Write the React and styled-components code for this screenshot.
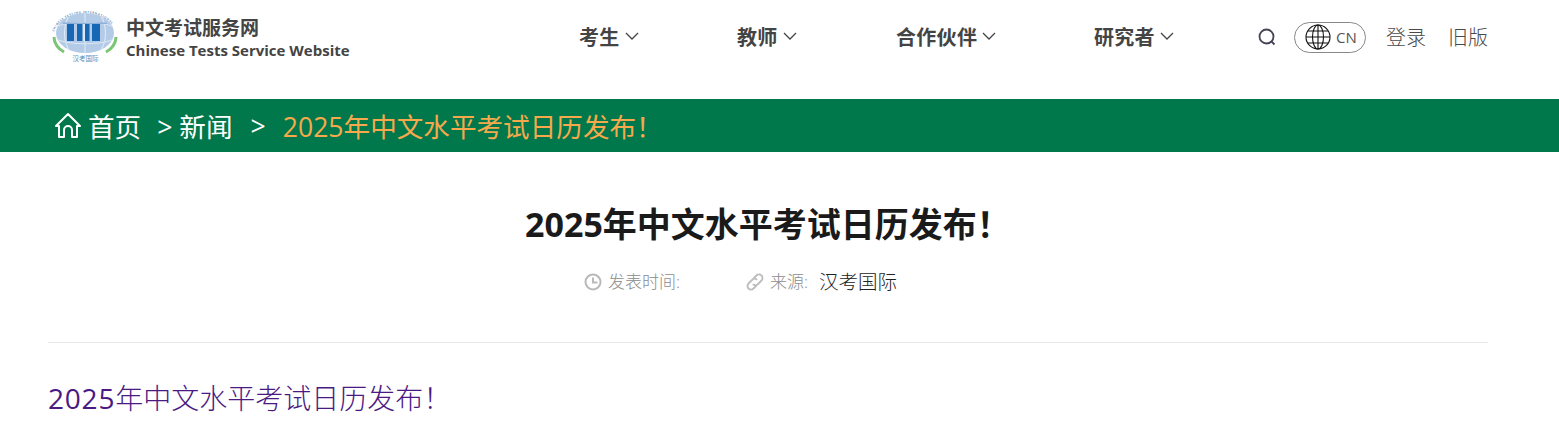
import React from 'react'
import styled, { createGlobalStyle } from 'styled-components'

const GlobalStyle = createGlobalStyle`
    html, body {
        margin: 0;
        padding: 0;
        background: #fff;
        font-family: "Open Sans", "Noto Sans CJK SC", sans-serif;
    }
    * {
        box-sizing: border-box;
    }
`;

const Header = styled.header`
    height: 99px;
    padding: 0 71px 0 52px;
    display: flex;
    align-items: flex-start;
    justify-content: space-between;
`;

const Brand = styled.div`
    width: 300px;
    padding-top: 10px;
    display: flex;
    align-items: center;
    gap: 8px;
`;

const BrandText = styled.div`
    margin-top: 3px;
    display: flex;
    flex-direction: column;
    color: #444;
    font-weight: 700;
`;

const BrandName = styled.span`
    font-size: 19px;
    line-height: 23px;
`;

const BrandEnglish = styled.span`
    font-size: 15px;
    line-height: 21px;
`;

const Nav = styled.nav`
    margin-left: 227px;
    padding-top: 22px;
    display: flex;
    flex: 1;
`;

const NavItem = styled.a`
    width: ${(props) => props.$width}px;
    height: 28px;
    display: flex;
    align-items: center;
    gap: 5px;
    color: #444;
    font-size: 20px;
    font-weight: 700;
    letter-spacing: 0.3px;
`;

const Tools = styled.div`
    padding-top: 20px;
    display: flex;
    align-items: center;
`;

const LangPill = styled.div`
    width: 72px;
    height: 31px;
    margin: 0 20px 0 17px;
    padding-left: 10px;
    display: flex;
    align-items: center;
    gap: 5px;
    border: 1px solid #888;
    border-radius: 16px;
    color: #555;
    font-size: 15px;
`;

const ToolLink = styled.a`
    margin-left: ${(props) => props.$gap || 0}px;
    padding-top: 2px;
    color: #4a4a4a;
    font-size: 20px;
    font-weight: 300;
    line-height: 32px;
`;

const Crumbs = styled.div`
    height: 53px;
    padding-left: 54px;
    display: flex;
    align-items: center;
    background: #00784b;
    color: #fff;
    font-size: 26.6px;
`;

const CrumbLink = styled.a`
    margin-left: ${(props) => props.$gap || 0}px;
    display: flex;
    align-items: center;
`;

const CrumbCurrent = styled.span`
    margin-left: 17px;
    color: #f5a94c;
`;

const Main = styled.main`
    margin: 0 71px 0 48px;
`;

const Title = styled.h1`
    margin: 0;
    padding-top: 47px;
    text-align: center;
    color: #1a1a1a;
    font-size: 34px;
    font-weight: 700;
    line-height: 50px;
`;

const MetaRow = styled.div`
    margin-top: 20px;
    padding-bottom: 47px;
    display: flex;
    justify-content: center;
    border-bottom: 1px solid #e6e6e6;
    font-size: 17px;
    font-weight: 300;
    line-height: 26px;
    color: #8c8c8c;
`;

const MetaItem = styled.div`
    width: ${(props) => props.$width}px;
    display: flex;
    align-items: center;
    gap: 6px;
`;

const MetaValue = styled.span`
    margin-left: 5px;
    color: #222;
    font-size: 19.5px;
`;

const Body = styled.p`
    margin: 32px 0 0;
    color: #4a1a82;
    font-size: 28px;
    font-weight: 300;
    line-height: 46px;
`;

const Year = styled.span`
    letter-spacing: 0.8px;
    font-weight: 400;
`;

function Chevron() {
    return (
        <svg width="14" height="8" viewBox="0 0 14 8" fill="none" stroke="#444" strokeWidth="1.3">
            <path d="M1 1l6 6 6-6" />
        </svg>
    );
}

function Logo() {
    return (
        <svg width="66" height="54" viewBox="0 0 66 54">
            <defs>
                <path id="ring" d="M1 28a32 25 0 0 1 64 0" />
            </defs>
            <ellipse cx="33" cy="23" rx="29" ry="20" fill="#b3cbe6" />
            <path d="M6 16c14-5 40-5 54 0M6 30c14 5 40 5 54 0M33 3v40M17 6c-6 10-6 24 0 34M49 6c6 10 6 24 0 34" fill="none" stroke="#dbe7f4" strokeWidth="1.2" />
            <rect x="11" y="12.5" width="44" height="1.5" fill="#8eb0d8" />
            <path d="M15 14h7v17h-7zM25 14h12.500v17H25zM40 14h8v17h-8z" fill="#1767b4" />
            <rect x="30.500" y="14" width="2.500" height="17" fill="#dbe7f4" />
            <text fontSize="3" fill="#6b90bb" fontWeight="700" letterSpacing="0.6">
                <textPath href="#ring" startOffset="7%">CHINESE TESTING INTERNATIONAL</textPath>
            </text>
            <path d="M2 27c0 6 4 12 10 15M64 27c0 6-4 12-10 15" fill="none" stroke="#7cc576" strokeWidth="3" />
            <text x="33.500" y="51" textAnchor="middle" fontSize="6.500" fill="#5b8cc0">汉考国际</text>
        </svg>
    );
}

function SearchIcon() {
    return (
        <svg width="20" height="20" viewBox="0 0 20 20" fill="none" stroke="#445" strokeWidth="1.8">
            <circle cx="9.5" cy="9.5" r="7" />
            <path d="M14.5 14.5l3 3" />
        </svg>
    );
}

function GlobeIcon() {
    return (
        <svg width="26" height="26" viewBox="0 0 26 26" fill="none" stroke="#111" strokeWidth="1.1">
            <circle cx="13" cy="13" r="12" />
            <ellipse cx="13" cy="13" rx="5.5" ry="12" />
            <path d="M13 1v24M1 13h24M3 7h20M3 19h20" />
        </svg>
    );
}

function HomeIcon() {
    return (
        <svg width="28" height="28" viewBox="0 0 28 28" fill="none" stroke="#fff" strokeWidth="2" strokeLinejoin="round">
            <path d="M2 14L14 2l12 12h-3v11h-5v-7a4 4 0 0 0-8 0v7H5V14z" />
        </svg>
    );
}

function ClockIcon() {
    return (
        <svg width="18" height="18" viewBox="0 0 18 18" fill="none" stroke="#b9b9b9" strokeWidth="2">
            <circle cx="9" cy="9" r="7.5" />
            <path d="M9 4.5V9.5H13.5" />
        </svg>
    );
}

function LinkIcon() {
    return (
        <svg width="18" height="18" viewBox="0 0 18 18" fill="none" stroke="#bdbdbd" strokeWidth="1.8">
            <path d="M7.5 5.5l3-3a3.2 3.2 0 0 1 5 5l-4 4a3 3 0 0 1-4.5-.5" />
            <path d="M10.5 12.5l-3 3a3.2 3.2 0 0 1-5-5l4-4a3 3 0 0 1 4.5.5" />
        </svg>
    );
}

export default function App() {
    return (
        <>
            <GlobalStyle />
            <Header>
                <Brand>
                    <Logo />
                    <BrandText>
                        <BrandName>中文考试服务网</BrandName>
                        <BrandEnglish>Chinese Tests Service Website</BrandEnglish>
                    </BrandText>
                </Brand>
                <Nav>
                    <NavItem $width={158}>考生 <Chevron /></NavItem>
                    <NavItem $width={159}>教师 <Chevron /></NavItem>
                    <NavItem $width={198}>合作伙伴 <Chevron /></NavItem>
                    <NavItem $width={100}>研究者 <Chevron /></NavItem>
                </Nav>
                <Tools>
                    <SearchIcon />
                    <LangPill>
                        <GlobeIcon />
                        CN
                    </LangPill>
                    <ToolLink>登录</ToolLink>
                    <ToolLink $gap={22}>旧版</ToolLink>
                </Tools>
            </Header>
            <Crumbs>
                <CrumbLink><HomeIcon /></CrumbLink>
                <CrumbLink $gap={6}>首页</CrumbLink>
                <CrumbLink $gap={16}>&gt;&nbsp;新闻</CrumbLink>
                <CrumbLink $gap={18}>&gt;</CrumbLink>
                <CrumbCurrent>2025年中文水平考试日历发布！</CrumbCurrent>
            </Crumbs>
            <Main>
                <Title>2025年中文水平考试日历发布！</Title>
                <MetaRow>
                    <MetaItem $width={162}><ClockIcon />发表时间:</MetaItem>
                    <MetaItem $width={206}><LinkIcon />来源:<MetaValue>汉考国际</MetaValue></MetaItem>
                </MetaRow>
                <Body><Year>2025</Year>年中文水平考试日历发布！</Body>
            </Main>
        </>
    );
}
